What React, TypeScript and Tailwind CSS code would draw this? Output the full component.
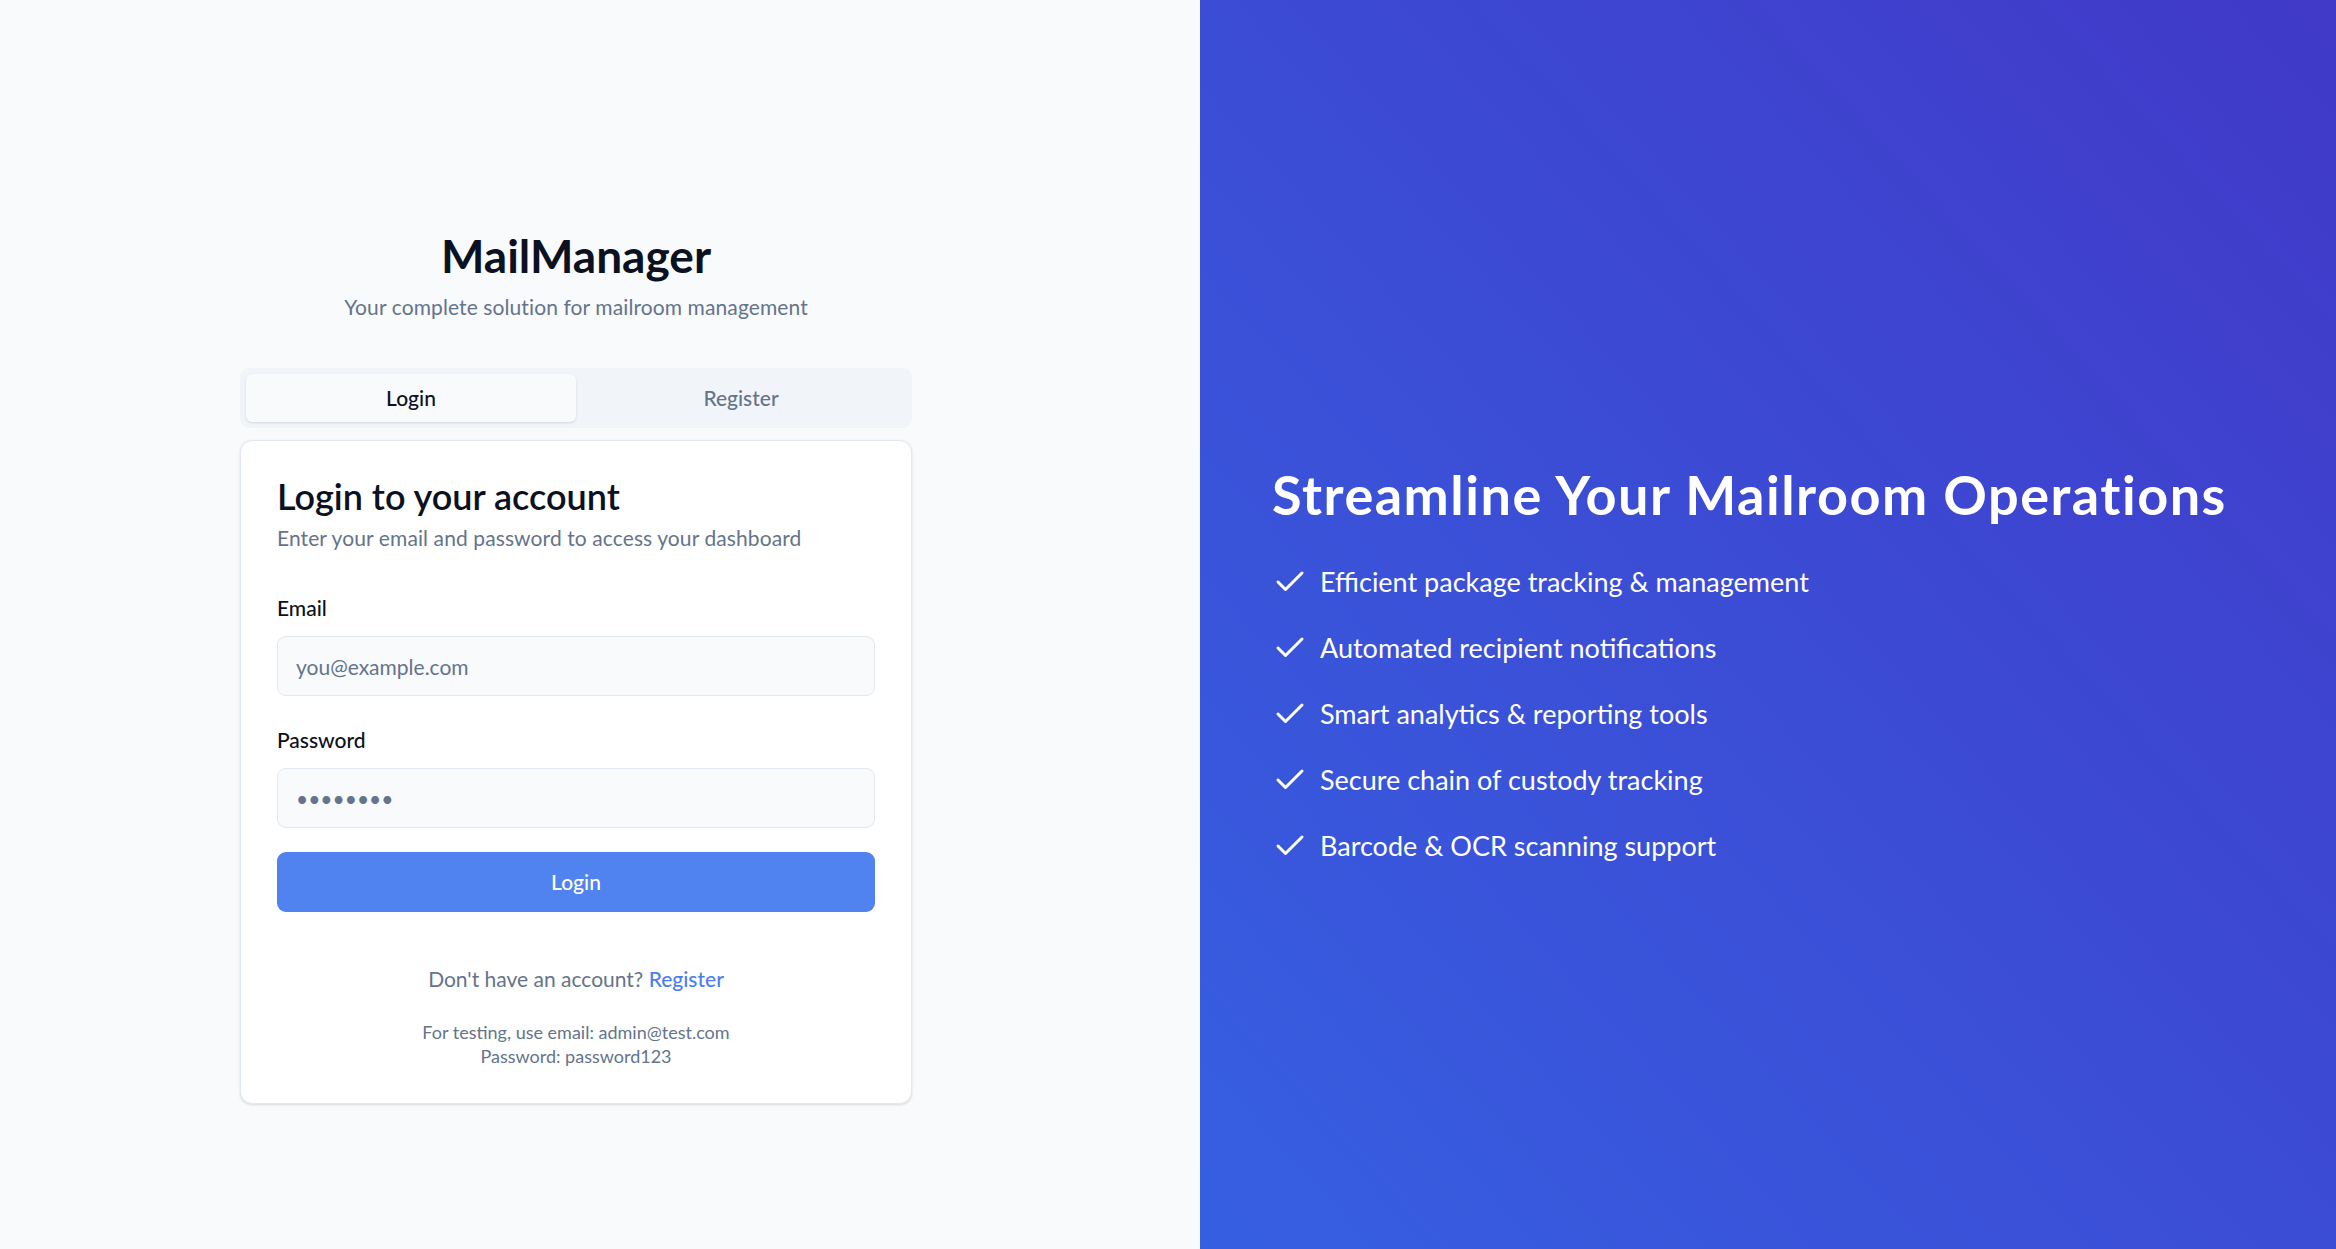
import { Check } from 'lucide-react'

const features = [
  'Efficient package tracking & management',
  'Automated recipient notifications',
  'Smart analytics & reporting tools',
  'Secure chain of custody tracking',
  'Barcode & OCR scanning support'
]

export default function App() {
  return (
    <div className="flex h-screen w-full overflow-hidden font-['Lato',sans-serif]">
      {/* Left: auth */}
      <div className="flex w-[1200px] shrink-0 items-center justify-center bg-[#f8fafc] pr-12 pt-[84px]">
        <div className="w-[672px]">
          <div className="text-center">
            <h1 className="text-[46px] font-bold leading-[54px] text-[#0b1120]">MailManager</h1>
            <p className="mt-[9px] text-[21px] leading-[30px] tracking-[0.1px] text-[#64748b]">
              Your complete solution for mailroom management
            </p>
          </div>

          {/* Tabs */}
          <div className="mt-[46px] grid h-[60px] grid-cols-2 rounded-[9px] bg-[#f1f5f9] p-[6px]">
            <button className="rounded-[6px] bg-[#f8fafc] text-[21px] font-medium text-[#0b1120] shadow-sm">
              Login
            </button>
            <button className="rounded-[6px] text-[21px] font-medium text-[#64748b]">Register</button>
          </div>

          {/* Card */}
          <div className="mt-[12px] rounded-[12px] border border-[#e2e8f0] bg-white px-[36px] pt-[37px] pb-[35px] shadow-sm">
            <h2 className="text-[36px] font-semibold leading-[36px] text-[#0b1120]">Login to your account</h2>
            <p className="mt-[9px] text-[21px] leading-[30px] tracking-[0.1px] text-[#64748b]">
              Enter your email and password to access your dashboard
            </p>

            <label className="mt-[40px] block text-[21px] font-medium leading-[30px] text-[#0b1120]">Email</label>
            <input
              type="email"
              placeholder="you@example.com"
              className="mt-[13px] block h-[60px] w-full rounded-[9px] border border-[#e2e8f0] bg-[#f8fafc] px-[18px] text-[21px] text-[#0b1120] outline-none placeholder:text-[#64748b]"
            />

            <label className="mt-[29px] block text-[21px] font-medium leading-[30px] text-[#0b1120]">Password</label>
            <input
              type="password"
              placeholder="••••••••"
              className="mt-[13px] block h-[60px] w-full rounded-[9px] border border-[#e2e8f0] bg-[#f8fafc] px-[18px] text-[21px] text-[#0b1120] outline-none placeholder:text-[#64748b]"
            />

            <button className="mt-[24px] h-[60px] w-full rounded-[9px] bg-[#5083ef] text-[21px] font-medium text-white">
              Login
            </button>

            <p className="mt-[52px] text-center text-[21px] leading-[30px] text-[#64748b]">
              Don't have an account? <span className="font-medium text-[#4a7ef0]">Register</span>
            </p>
            <div className="mt-[26px] text-center text-[18px] leading-[24px] text-[#64748b]">
              <p>For testing, use email: admin@test.com</p>
              <p>Password: password123</p>
            </div>
          </div>
        </div>
      </div>

      {/* Right: marketing */}
      <div className="flex flex-1 items-center bg-linear-to-tr/srgb from-[#365fe1] to-[#4139c8] px-[72px] pt-[83px] text-white">
        <div>
          <h2 className="text-[54px] font-bold leading-[60px] tracking-[1.5px]">Streamline Your Mailroom Operations</h2>
          <ul className="mt-[36px] space-y-[24px]">
            {features.map((f) => (
              <li key={f} className="flex items-center text-[27px] leading-[42px]">
                <Check className="mr-[12px] h-[36px] w-[36px] shrink-0" strokeWidth={2} />
                {f}
              </li>
            ))}
          </ul>
        </div>
      </div>
    </div>
  )
}
